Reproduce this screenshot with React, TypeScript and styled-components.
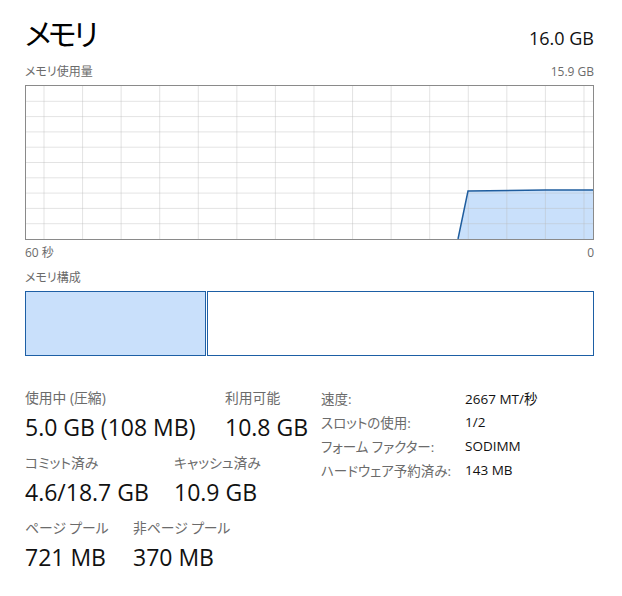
import React from "react";
import styled, { createGlobalStyle } from "styled-components";

const Global = createGlobalStyle`
  html, body { margin: 0; padding: 0; background: #ffffff; }
  body {
    font-family: "Open Sans", "Noto Sans CJK JP", sans-serif;
    font-feature-settings: "palt";
    color: #1a1a1a;
  }
`;

const Page = styled.div`
  width: 569px;
  padding: 14px 0 0 25px;
`;

const Header = styled.div`
  display: flex;
  justify-content: space-between;
  align-items: baseline;
`;

const Title = styled.h1`
  margin: 0;
  font-size: 30px;
  line-height: 40px;
  font-weight: 400;
  letter-spacing: -3px;
  color: #000;
`;

const Total = styled.div`
  font-size: 18px;
  line-height: 24px;
  color: #111;
`;

const Caption = styled.div<{ $top?: number }>`
  display: flex;
  justify-content: space-between;
  font-size: 12px;
  line-height: 16px;
  color: #6b6b6b;
  margin-top: ${(p) => p.$top ?? 0}px;
`;

const GraphBox = styled.div`
  margin-top: 5px;
  height: 153px;
  border: 1px solid #8a8a8a;
  background: #fff;
  svg { display: block; }
`;

const CompBar = styled.div`
  margin-top: 5px;
  display: flex;
  gap: 1px;
  height: 65px;
`;

const Segment = styled.div<{ $fill: string }>`
  box-sizing: border-box;
  border: 1px solid #1d5fa5;
  background: ${(p) => p.$fill};
`;

const Stats = styled.div`
  display: flex;
  margin-top: 30px;
`;

const LeftCol = styled.div`
  width: 296px;
  display: flex;
  flex-direction: column;
`;

const StatRow = styled.div`
  display: flex;
  height: 65px;
`;

const Stat = styled.div<{ $w?: number }>`
  width: ${(p) => (p.$w ? `${p.$w}px` : "auto")};
  display: flex;
  flex-direction: column;
`;

const StatLabel = styled.div`
  font-size: 13.8px;
  line-height: 24px;
  color: #6b6b6b;
`;

const StatValue = styled.div`
  margin-top: 2px;
  font-size: 23px;
  line-height: 30px;
  color: #111;
`;

const InfoGrid = styled.div`
  display: grid;
  grid-template-columns: 144px auto;
  grid-auto-rows: 24px;
  align-items: center;
  align-content: start;
`;

const InfoKey = styled.div`
  font-size: 13.5px;
  color: #6b6b6b;
`;

const InfoVal = styled.div`
  font-size: 13.5px;
  color: #111;
`;

const W = 567;
const H = 153;

function Graph() {
  const vx: number[] = [];
  for (let i = 0; i < 15; i++) vx.push(18 + i * 38.57);
  const hy: number[] = [];
  for (let i = 1; i < 10; i++) hy.push(i * 15.3);
  const area = "432,153 442,105 519,104 567,104 567,153";
  const line = "432,153 442,105 519,104 567,104";
  return (
    <svg width={W} height={H} viewBox={`0 0 ${W} ${H}`}>
      <polygon points={area} fill="#c9e0fb" />
      {vx.map((x) => (
        <line key={"v" + x} x1={x} y1={0} x2={x} y2={H} stroke="#b8b8b8" strokeOpacity={0.4} strokeWidth={1} />
      ))}
      {hy.map((y) => (
        <line key={"h" + y} x1={0} y1={y} x2={W} y2={y} stroke="#b8b8b8" strokeOpacity={0.4} strokeWidth={1} />
      ))}
      <polyline points={line} fill="none" stroke="#1f5d9e" strokeWidth={1.5} />
    </svg>
  );
}

export default function App() {
  return (
    <>
      <Global />
      <Page>
        <Header>
          <Title>メモリ</Title>
          <Total>16.0 GB</Total>
        </Header>
        <Caption $top={10}>
          <span>メモリ使用量</span>
          <span>15.9 GB</span>
        </Caption>
        <GraphBox>
          <Graph />
        </GraphBox>
        <Caption $top={5}>
          <span>60 秒</span>
          <span>0</span>
        </Caption>
        <Caption $top={9}>
          <span>メモリ構成</span>
        </Caption>
        <CompBar>
          <Segment $fill="#c9e0fb" style={{ width: 181 }} />
          <Segment $fill="#ffffff" style={{ flex: 1 }} />
        </CompBar>
        <Stats>
          <LeftCol>
            <StatRow>
              <Stat $w={200}>
                <StatLabel>使用中 (圧縮)</StatLabel>
                <StatValue>5.0 GB (108 MB)</StatValue>
              </Stat>
              <Stat>
                <StatLabel>利用可能</StatLabel>
                <StatValue>10.8 GB</StatValue>
              </Stat>
            </StatRow>
            <StatRow>
              <Stat $w={149}>
                <StatLabel>コミット済み</StatLabel>
                <StatValue>4.6/18.7 GB</StatValue>
              </Stat>
              <Stat>
                <StatLabel>キャッシュ済み</StatLabel>
                <StatValue>10.9 GB</StatValue>
              </Stat>
            </StatRow>
            <StatRow>
              <Stat $w={108}>
                <StatLabel>ページ プール</StatLabel>
                <StatValue>721 MB</StatValue>
              </Stat>
              <Stat>
                <StatLabel>非ページ プール</StatLabel>
                <StatValue>370 MB</StatValue>
              </Stat>
            </StatRow>
          </LeftCol>
          <InfoGrid>
            <InfoKey>速度:</InfoKey>
            <InfoVal>2667 MT/秒</InfoVal>
            <InfoKey>スロットの使用:</InfoKey>
            <InfoVal>1/2</InfoVal>
            <InfoKey>フォーム ファクター:</InfoKey>
            <InfoVal>SODIMM</InfoVal>
            <InfoKey>ハードウェア予約済み:</InfoKey>
            <InfoVal>143 MB</InfoVal>
          </InfoGrid>
        </Stats>
      </Page>
    </>
  );
}
